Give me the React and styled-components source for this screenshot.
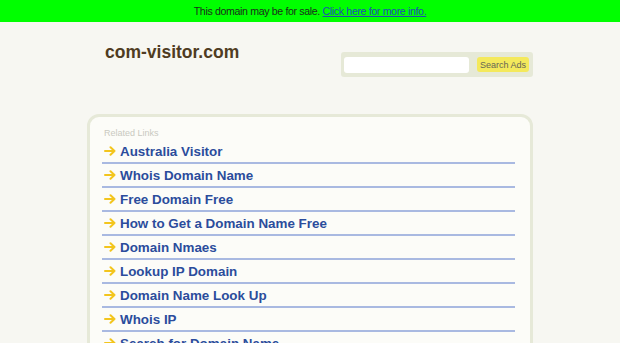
import React from "react";
import styled, { createGlobalStyle } from "styled-components";

const links = [
  "Australia Visitor",
  "Whois Domain Name",
  "Free Domain Free",
  "How to Get a Domain Name Free",
  "Domain Nmaes",
  "Lookup IP Domain",
  "Domain Name Look Up",
  "Whois IP",
  "Search for Domain Name",
  "Domain Name Search",
];

const Arrow = () => (
  <svg width="12" height="10" viewBox="0 0 12 10">
    <path
      d="M1 5 H10.5 M6.5 1.2 L10.5 5 L6.5 8.8"
      fill="none"
      stroke="#f3c51d"
      strokeWidth="2"
      strokeLinecap="round"
      strokeLinejoin="round"
    />
  </svg>
);

const App = () => {
  return (
    <>
      <GlobalStyle />
      <TopBar>
        This domain may be for sale. <a href="#">Click here for more info.</a>
      </TopBar>
      <Container>
        <Header>
          <Logo>com-visitor.com</Logo>
          <SearchBox>
            <input type="text" />
            <button>Search Ads</button>
          </SearchBox>
        </Header>
        <Panel>
          <Label>Related Links</Label>
          {links.map((item, index) => {
            return (
              <Row key={index}>
                <Arrow />
                <a href="#">{item}</a>
              </Row>
            );
          })}
        </Panel>
      </Container>
    </>
  );
};

const GlobalStyle = createGlobalStyle`
  body {
    margin: 0;
    background-color: #f7f7f2;
    font-family: "Liberation Sans", Arial, sans-serif;
    overflow: hidden;
  }
`;

const TopBar = styled.div`
  height: 22px;
  background-color: #00ff00;
  color: #1c2e1c;
  font-size: 10.6px;
  letter-spacing: -0.35px;
  line-height: 22px;
  text-align: center;
  a {
    color: #1d4fb0;
    text-decoration: underline;
  }
`;

const Container = styled.div`
  width: 446px;
  margin: 0 auto;
`;

const Header = styled.div`
  display: flex;
  justify-content: space-between;
  align-items: flex-start;
  height: 92px;
`;

const Logo = styled.div`
  margin: 20px 0 0 18px;
  font-size: 17.5px;
  font-weight: bold;
  color: #4f3c22;
`;

const SearchBox = styled.div`
  display: flex;
  align-items: center;
  gap: 8px;
  margin-top: 30px;
  width: 192px;
  height: 25px;
  box-sizing: border-box;
  padding: 0 4px 0 3px;
  border-radius: 3px;
  background-color: #e6e9d7;

  input {
    width: 125px;
    height: 16px;
    box-sizing: border-box;
    border: none;
    border-radius: 3px;
    background: #fff;
    outline: none;
  }
  button {
    width: 52px;
    height: 15px;
    padding: 0;
    border: none;
    border-radius: 3px;
    background-color: #f4e95c;
    color: #666655;
    font-family: "Liberation Sans", Arial, sans-serif;
    font-size: 9px;
  }
`;

const Panel = styled.div`
  border: 3px solid #e6e9d8;
  border-radius: 12px;
  background-color: #fcfcf8;
  padding: 10px 15px 20px 12px;
  min-height: 300px;
`;

const Label = styled.div`
  font-size: 9px;
  line-height: 13px;
  color: #c9c9c0;
  padding-left: 2px;
`;

const Row = styled.div`
  display: flex;
  align-items: center;
  gap: 4px;
  height: 22px;
  padding-left: 2px;
  border-bottom: 2px solid #a9b9e1;

  svg {
    flex-shrink: 0;
  }
  a {
    color: #2b4c9c;
    font-size: 13.4px;
    font-weight: bold;
    text-decoration: none;
  }
`;

export default App;
